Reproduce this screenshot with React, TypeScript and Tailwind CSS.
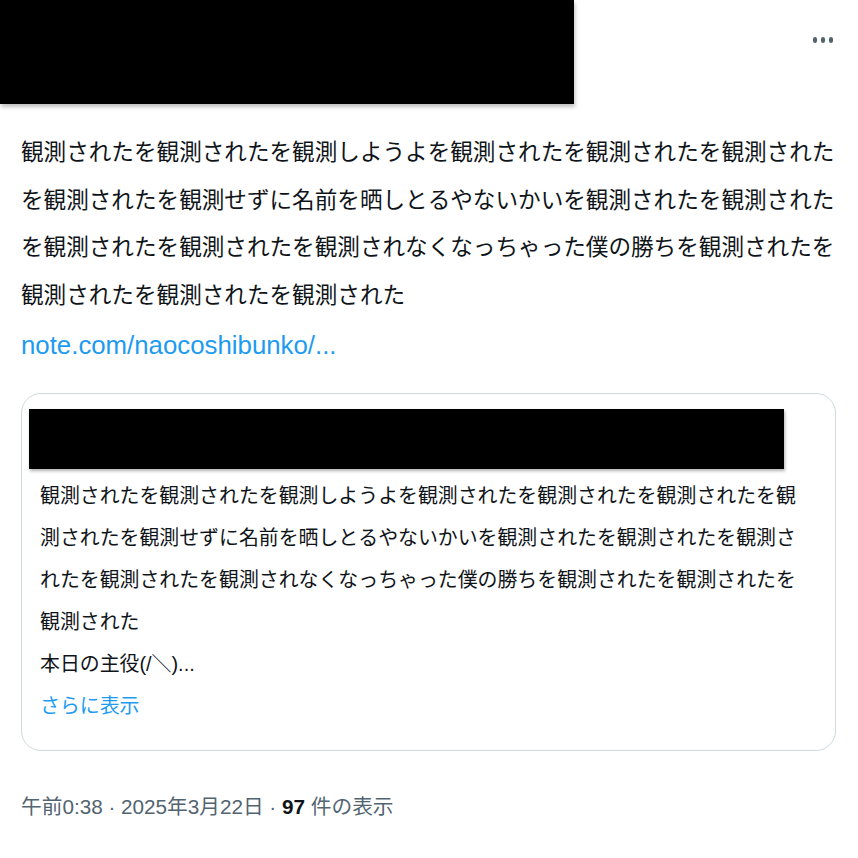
const font = { fontFamily: '"Liberation Sans", "Noto Sans CJK JP", sans-serif' };

const tweetText =
  '観測されたを観測されたを観測しようよを観測されたを観測されたを観測されたを観測されたを観測せずに名前を晒しとるやないかいを観測されたを観測されたを観測されたを観測されたを観測されなくなっちゃった僕の勝ちを観測されたを観測されたを観測されたを観測された';

const quoteText =
  '観測されたを観測されたを観測しようよを観測されたを観測されたを観測されたを観測されたを観測せずに名前を晒しとるやないかいを観測されたを観測されたを観測されたを観測されたを観測されなくなっちゃった僕の勝ちを観測されたを観測されたを観測された';

export default function App() {
  return (
    <div className="w-[858px] h-[858px] bg-white overflow-hidden" style={font}>
      {/* Header */}
      <div className="flex items-start justify-between">
        <div className="w-[574px] h-[104px] bg-black shadow-[1px_3px_4px_rgba(0,0,0,0.25)]" />
        <div className="flex gap-[4px] mt-[37px] mr-[25px]">
          <span className="w-[4px] h-[6px] rounded-full bg-[#536471]" />
          <span className="w-[4px] h-[6px] rounded-full bg-[#536471]" />
          <span className="w-[4px] h-[6px] rounded-full bg-[#536471]" />
        </div>
      </div>

      {/* Body */}
      <div className="px-[21px] pt-[25px] w-[858px]">
        <p className="w-[815px] text-[22.6px] leading-[47.5px] text-[#0f1419] break-all">
          {tweetText}
        </p>
        <a href="#" className="block mt-[6px] text-[25.8px] leading-[40px] text-[#1d9bf0]">
          note.com/naocoshibunko/...
        </a>

        {/* Quote card */}
        <div className="mt-[28px] w-[815px] h-[358px] border border-[#cfd9de] rounded-[20px] pt-[15px] px-[7px]">
          <div className="w-[755px] h-[60px] bg-black shadow-[1px_2px_3px_rgba(0,0,0,0.3)]" />
          <div className="mt-[6px] pl-[11px] w-[781px] text-[19.9px] leading-[42px] text-[#0f1419]">
            <p className="break-all">{quoteText}</p>
            <p>本日の主役(/＼)...</p>
            <p className="text-[#1d9bf0]">さらに表示</p>
          </div>
        </div>

        {/* Footer */}
        <div className="mt-[42px] text-[20.7px] leading-[28px] text-[#536471]">
          午前0:38 · 2025年3月22日 · <span className="font-bold text-[#0f1419]">97</span> 件の表示
        </div>
      </div>
    </div>
  );
}
